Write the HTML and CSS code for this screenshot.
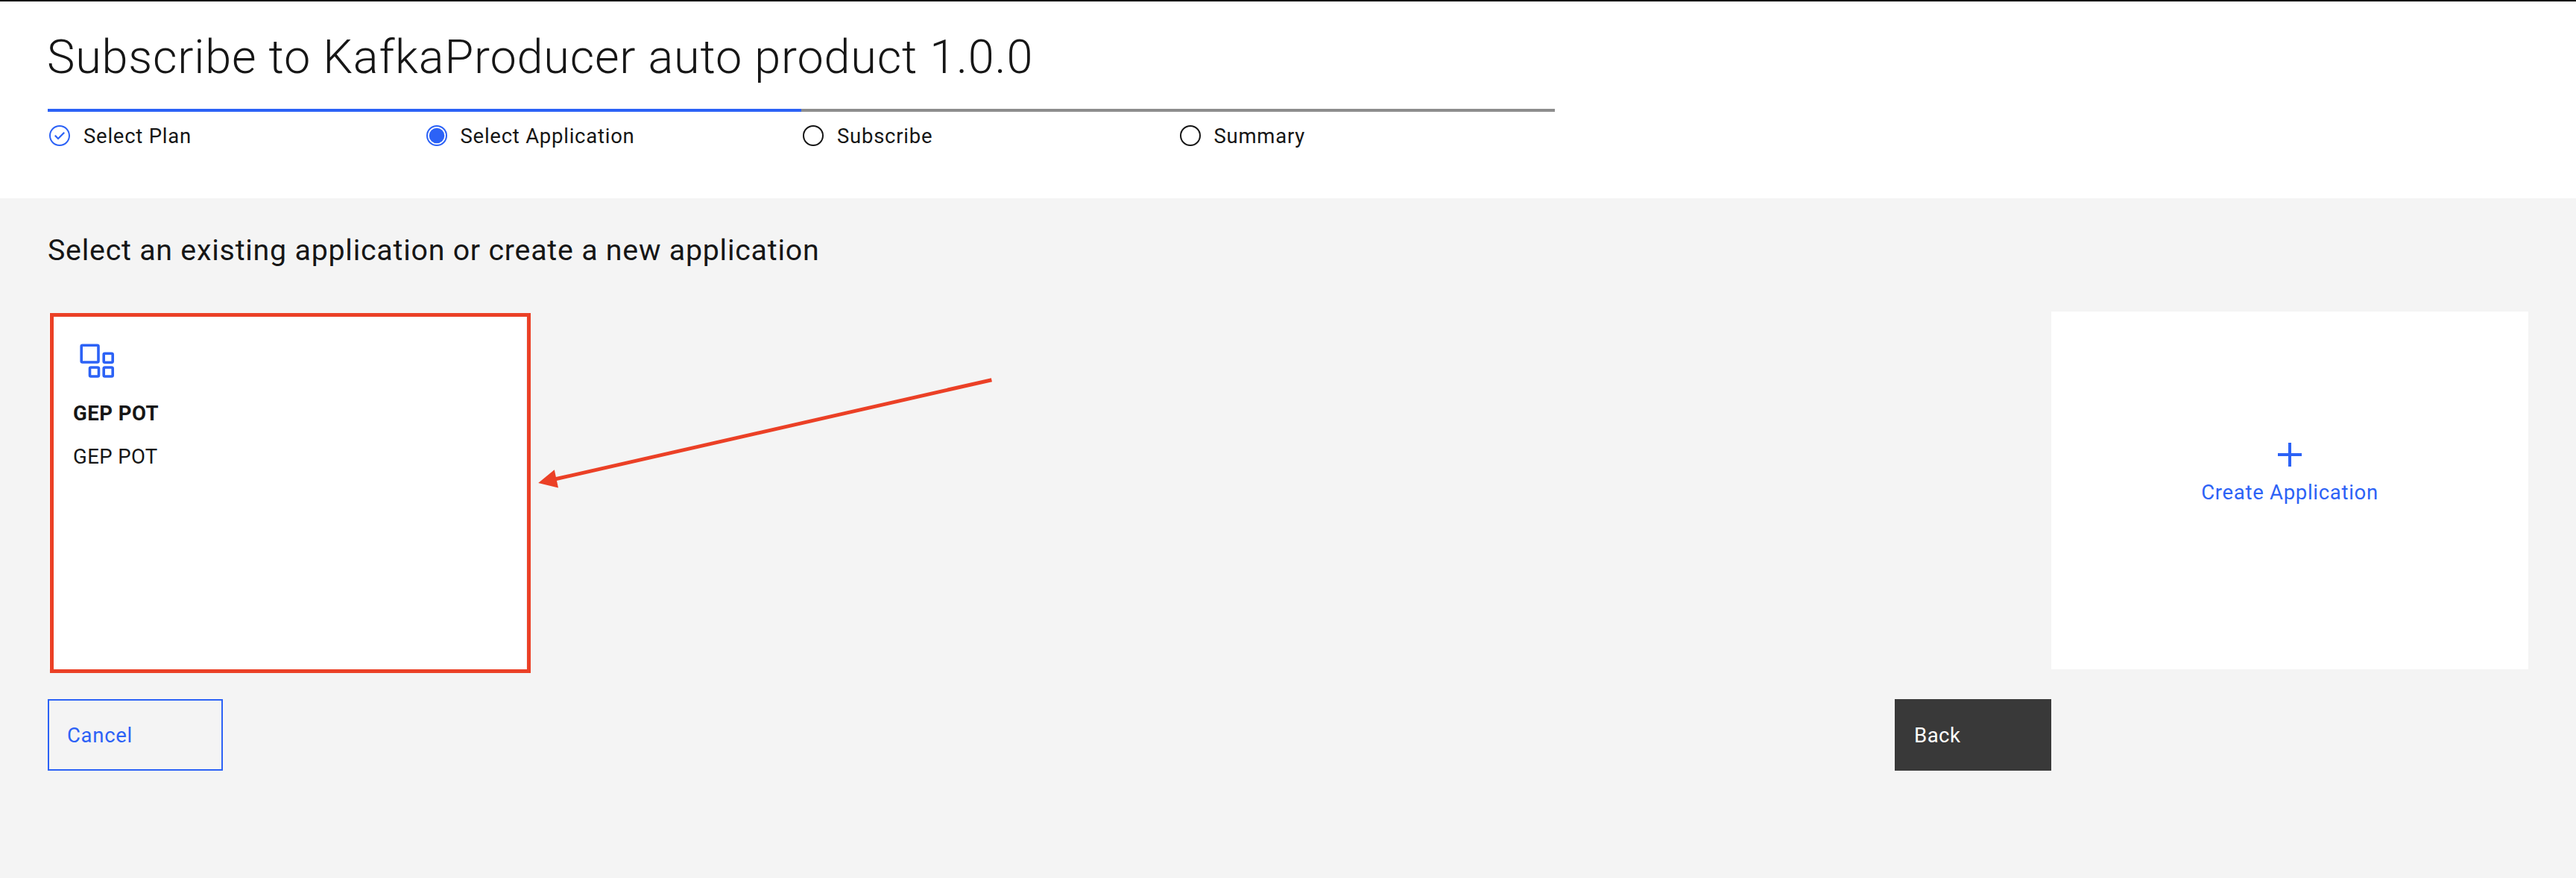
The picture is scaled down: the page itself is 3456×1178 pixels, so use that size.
FILE: index.html
```html
<!DOCTYPE html>
<html lang="en">
<head>
<meta charset="utf-8">
<title>Subscribe to KafkaProducer auto product 1.0.0</title>
<link rel="stylesheet" href="styles.css">
</head>
<body>
<header class="header">
  <h1 class="title">Subscribe to KafkaProducer auto product 1.0.0</h1>
  <ol class="progress">
    <li class="step step-done">
      <svg class="step-icon" viewBox="0 0 16 16"><path d="M8 1C4.1 1 1 4.1 1 8s3.1 7 7 7 7-3.1 7-7-3.1-7-7-7zm0 13c-3.300 0-6-2.700-6-6s2.700-6 6-6 6 2.700 6 6-2.700 6-6 6z"/><path d="M7 10.800 4.500 8.300l.8-.8L7 9.200l3.700-3.700.8.8z"/></svg>
      <span class="step-label">Select Plan</span>
    </li>
    <li class="step step-done">
      <svg class="step-icon" viewBox="0 0 32 32"><circle cx="16" cy="16" r="13" fill="none" stroke="#2c62f6" stroke-width="2"/><circle cx="16" cy="16" r="10.300"/></svg>
      <span class="step-label">Select Application</span>
    </li>
    <li class="step">
      <svg class="step-icon" viewBox="0 0 32 32"><circle cx="16" cy="16" r="13" fill="none" stroke="#161616" stroke-width="2"/></svg>
      <span class="step-label">Subscribe</span>
    </li>
    <li class="step">
      <svg class="step-icon" viewBox="0 0 32 32"><circle cx="16" cy="16" r="13" fill="none" stroke="#161616" stroke-width="2"/></svg>
      <span class="step-label">Summary</span>
    </li>
  </ol>
</header>
<main class="content">
  <h2 class="heading">Select an existing application or create a new application</h2>
  <div class="cards">
    <article class="card app-card">
      <svg class="app-icon" viewBox="0 0 48 48"><g fill="none" stroke="#2c62f6" stroke-width="3.600"><rect x="3.200" y="3.200" width="22.800" height="22.800" rx="1.500"/><rect x="33.200" y="14.200" width="12" height="12" rx="1.500"/><rect x="14.500" y="33" width="12" height="12" rx="1.500"/><rect x="33.200" y="33" width="12" height="12" rx="1.500"/></g></svg>
      <strong class="app-name">GEP POT</strong>
      <span class="app-text">GEP POT</span>
      <span class="highlight"></span>
      <svg class="arrow" viewBox="0 0 620 160"><path d="M23 143.300 610.400 9.700" stroke="#eb4026" stroke-width="5"/><path d="M2.200 148 23.800 130.300 29 154.400z" fill="#eb4026"/></svg>
    </article>
    <article class="card create-card">
      <svg class="plus" viewBox="0 0 32 32"><path d="M14 0h4v14h14v4H18v14h-4V18H0v-4h14z"/></svg>
      <span class="create-text">Create Application</span>
    </article>
  </div>
  <div class="actions">
    <button class="button cancel">Cancel</button>
    <button class="button back">Back</button>
  </div>
</main>
</body>
</html>
```
FILE: styles.css
```css
* {
  box-sizing: border-box;
}

body {
  margin: 0;
  min-height: 1178px;
  display: flex;
  flex-direction: column;
  background: #f4f4f4;
  color: #161616;
  font: 400 27.5px/36px Roboto, "Liberation Sans", sans-serif;
  letter-spacing: 0.75px;
}

.header {
  height: 266px;
  padding: 35px 64px 0;
  border-top: 2px solid #161616;
  background: #fff;
}

.title {
  margin: 0 0 29px -1px;
  font-size: 63px;
  font-weight: 300;
  line-height: 80px;
  letter-spacing: 0.8px;
}

.progress {
  display: grid;
  grid-template-columns: repeat(4, 1fr);
  width: 2022px;
  margin: 0;
  padding: 0;
  list-style: none;
}

.step {
  display: flex;
  align-items: center;
  gap: 16px;
  padding-top: 14px;
  border-top: 4px solid #8d8d8d;
}

.step-done {
  border-color: #2c62f6;
}

.step-icon {
  width: 32px;
  height: 32px;
  fill: #2c62f6;
}

.step-label {
  padding-top: 1px;
  line-height: 35px;
}

.content {
  flex: 1;
  padding: 42px 64px 0;
}

.heading {
  margin: 0 0 54px;
  font-size: 39.3px;
  font-weight: 400;
  line-height: 56px;
  letter-spacing: 0.78px;
}

.cards {
  display: flex;
  justify-content: space-between;
  align-items: flex-end;
  height: 480px;
  padding-left: 2px;
}

.card {
  display: flex;
  flex-direction: column;
  width: 640px;
  background: #fff;
}

.app-card {
  position: relative;
  height: 478px;
  padding: 40px 32px 0;
}

.app-icon {
  width: 48px;
  height: 48px;
  margin: 0 0 29px 8px;
}

.app-name {
  margin-bottom: 22px;
  letter-spacing: 0.5px;
}

.app-text {
  letter-spacing: 0.4px;
}

.highlight {
  position: absolute;
  left: 1px;
  top: 0;
  width: 645px;
  height: 483px;
  border: 5px solid #eb4026;
}

.arrow {
  position: absolute;
  left: 654px;
  top: 80px;
  width: 620px;
  height: 160px;
}

.create-card {
  height: 480px;
  align-items: center;
  padding-top: 176px;
  color: #2c62f6;
}

.plus {
  width: 32px;
  height: 32px;
  margin-bottom: 17px;
  fill: #2c62f6;
}

.create-text {
  letter-spacing: 0.7px;
}

.actions {
  display: flex;
  justify-content: space-between;
  width: 2688px;
  margin-top: 40px;
}

.button {
  height: 96px;
  border: 0;
  border-radius: 0;
  font: inherit;
  text-align: left;
}

.cancel {
  width: 235px;
  padding: 1px 24px 0;
  border: 2px solid #2c62f6;
  background: transparent;
  color: #2c62f6;
  letter-spacing: 0.7px;
}

.back {
  width: 210px;
  padding: 1px 26px 0;
  background: #393939;
  color: #fff;
  letter-spacing: 0.5px;
}
```
